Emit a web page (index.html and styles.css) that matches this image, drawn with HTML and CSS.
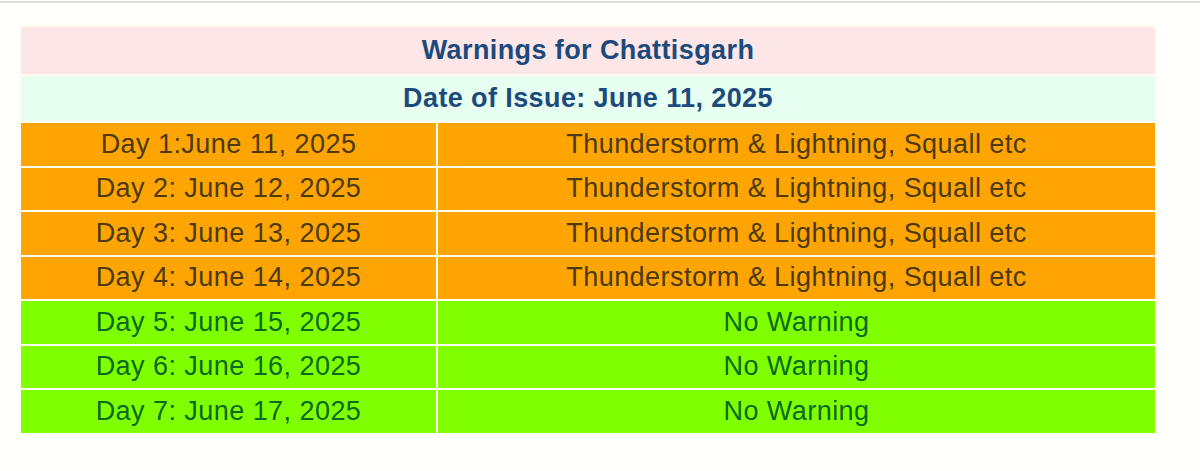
FILE: index.html
```html
<!DOCTYPE html>
<html>
<head>
<meta charset="utf-8">
<link rel="stylesheet" href="styles.css">
</head>
<body>
<div class="topline"></div>
<table class="warn">
  <tr class="title"><td colspan="2">Warnings for Chattisgarh</td></tr>
  <tr class="issue"><td colspan="2">Date of Issue: June 11, 2025</td></tr>
  <tr class="orange"><td class="day">Day 1:June 11, 2025</td><td>Thunderstorm &amp; Lightning, Squall etc</td></tr>
  <tr class="orange"><td class="day">Day 2: June 12, 2025</td><td>Thunderstorm &amp; Lightning, Squall etc</td></tr>
  <tr class="orange"><td class="day">Day 3: June 13, 2025</td><td>Thunderstorm &amp; Lightning, Squall etc</td></tr>
  <tr class="orange"><td class="day">Day 4: June 14, 2025</td><td>Thunderstorm &amp; Lightning, Squall etc</td></tr>
  <tr class="green"><td class="day">Day 5: June 15, 2025</td><td>No Warning</td></tr>
  <tr class="green"><td class="day">Day 6: June 16, 2025</td><td>No Warning</td></tr>
  <tr class="green"><td class="day">Day 7: June 17, 2025</td><td>No Warning</td></tr>
</table>
</body>
</html>
```
FILE: styles.css
```css
html, body {
  margin: 0;
  padding: 0;
  background: #fffffd;
}
body {
  font-family: "Liberation Sans", Arial, sans-serif;
}
.topline {
  height: 2px;
  margin-top: 1px;
  background: #dcdcdc;
}
.warn {
  border-collapse: separate;
  border-spacing: 2px;
  margin: 22px 0 0 19px;
  width: 1138px;
  background: #fffdf0;
}
.warn td {
  padding: 0;
  text-align: center;
  font-size: 27px;
  line-height: 1;
}
.title td {
  height: 47px;
  background: #fde6e8;
  color: #1d4a7c;
  font-weight: bold;
  font-size: 27px;
  letter-spacing: 0.4px;
}
.issue td {
  height: 45px;
  background: #e6fff1;
  color: #1d4a7c;
  font-weight: bold;
  font-size: 27px;
  letter-spacing: 0.4px;
}
.warn td.day {
  width: 415px;
}
.orange td {
  height: 42.5px;
  background: #ffa503;
  color: #4b3a12;
  letter-spacing: 0.45px;
}
.green td {
  height: 42.5px;
  background: #80ff00;
  color: #0a6a1f;
  letter-spacing: 0.45px;
}
```
